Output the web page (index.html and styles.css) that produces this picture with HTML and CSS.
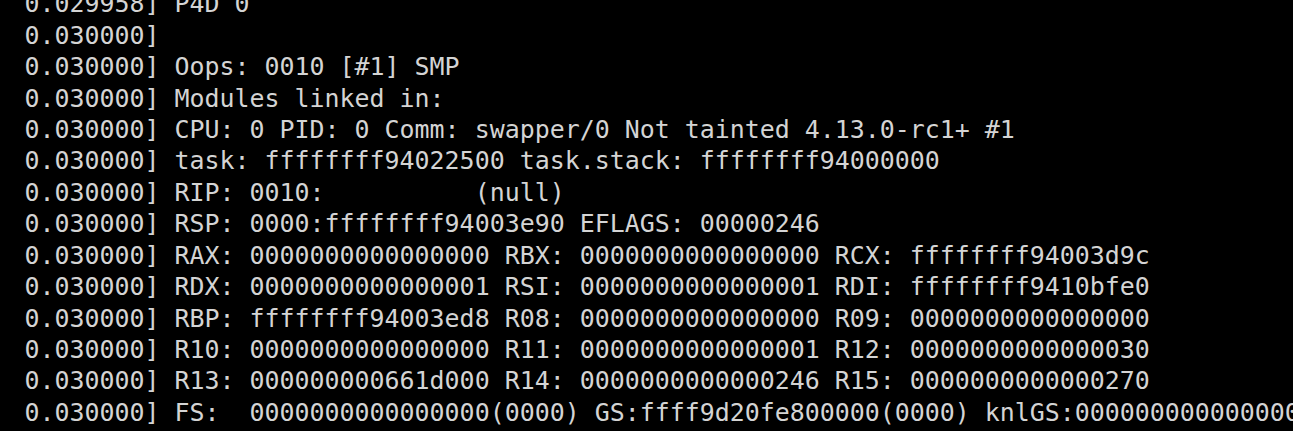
FILE: index.html
```html
<!DOCTYPE html>
<html>
<head>
<meta charset="utf-8">
<link rel="stylesheet" href="styles.css">
</head>
<body>
<pre class="console"><span class="line">0.029958] P4D 0</span>
<span class="line">0.030000]</span>
<span class="line">0.030000] Oops: 0010 [#1] SMP</span>
<span class="line">0.030000] Modules linked in:</span>
<span class="line">0.030000] CPU: 0 PID: 0 Comm: swapper/0 Not tainted 4.13.0-rc1+ #1</span>
<span class="line">0.030000] task: ffffffff94022500 task.stack: ffffffff94000000</span>
<span class="line">0.030000] RIP: 0010:          (null)</span>
<span class="line">0.030000] RSP: 0000:ffffffff94003e90 EFLAGS: 00000246</span>
<span class="line">0.030000] RAX: 0000000000000000 RBX: 0000000000000000 RCX: ffffffff94003d9c</span>
<span class="line">0.030000] RDX: 0000000000000001 RSI: 0000000000000001 RDI: ffffffff9410bfe0</span>
<span class="line">0.030000] RBP: ffffffff94003ed8 R08: 0000000000000000 R09: 0000000000000000</span>
<span class="line">0.030000] R10: 0000000000000000 R11: 0000000000000001 R12: 0000000000000030</span>
<span class="line">0.030000] R13: 000000000661d000 R14: 0000000000000246 R15: 0000000000000270</span>
<span class="line">0.030000] FS:  0000000000000000(0000) GS:ffff9d20fe800000(0000) knlGS:0000000000000000</span></pre>
</body>
</html>
```
FILE: styles.css
```css
html, body {
  margin: 0;
  padding: 0;
  background: #000;
  overflow: hidden;
  height: 431px;
}
.console {
  margin: -11.7px 0 0 0;
  padding: 0 0 0 24.5px;
  font-family: "DejaVu Sans Mono", monospace;
  font-size: 24.93px;
  line-height: 31.42px;
  color: #d4d4d4;
  white-space: pre;
}
```
